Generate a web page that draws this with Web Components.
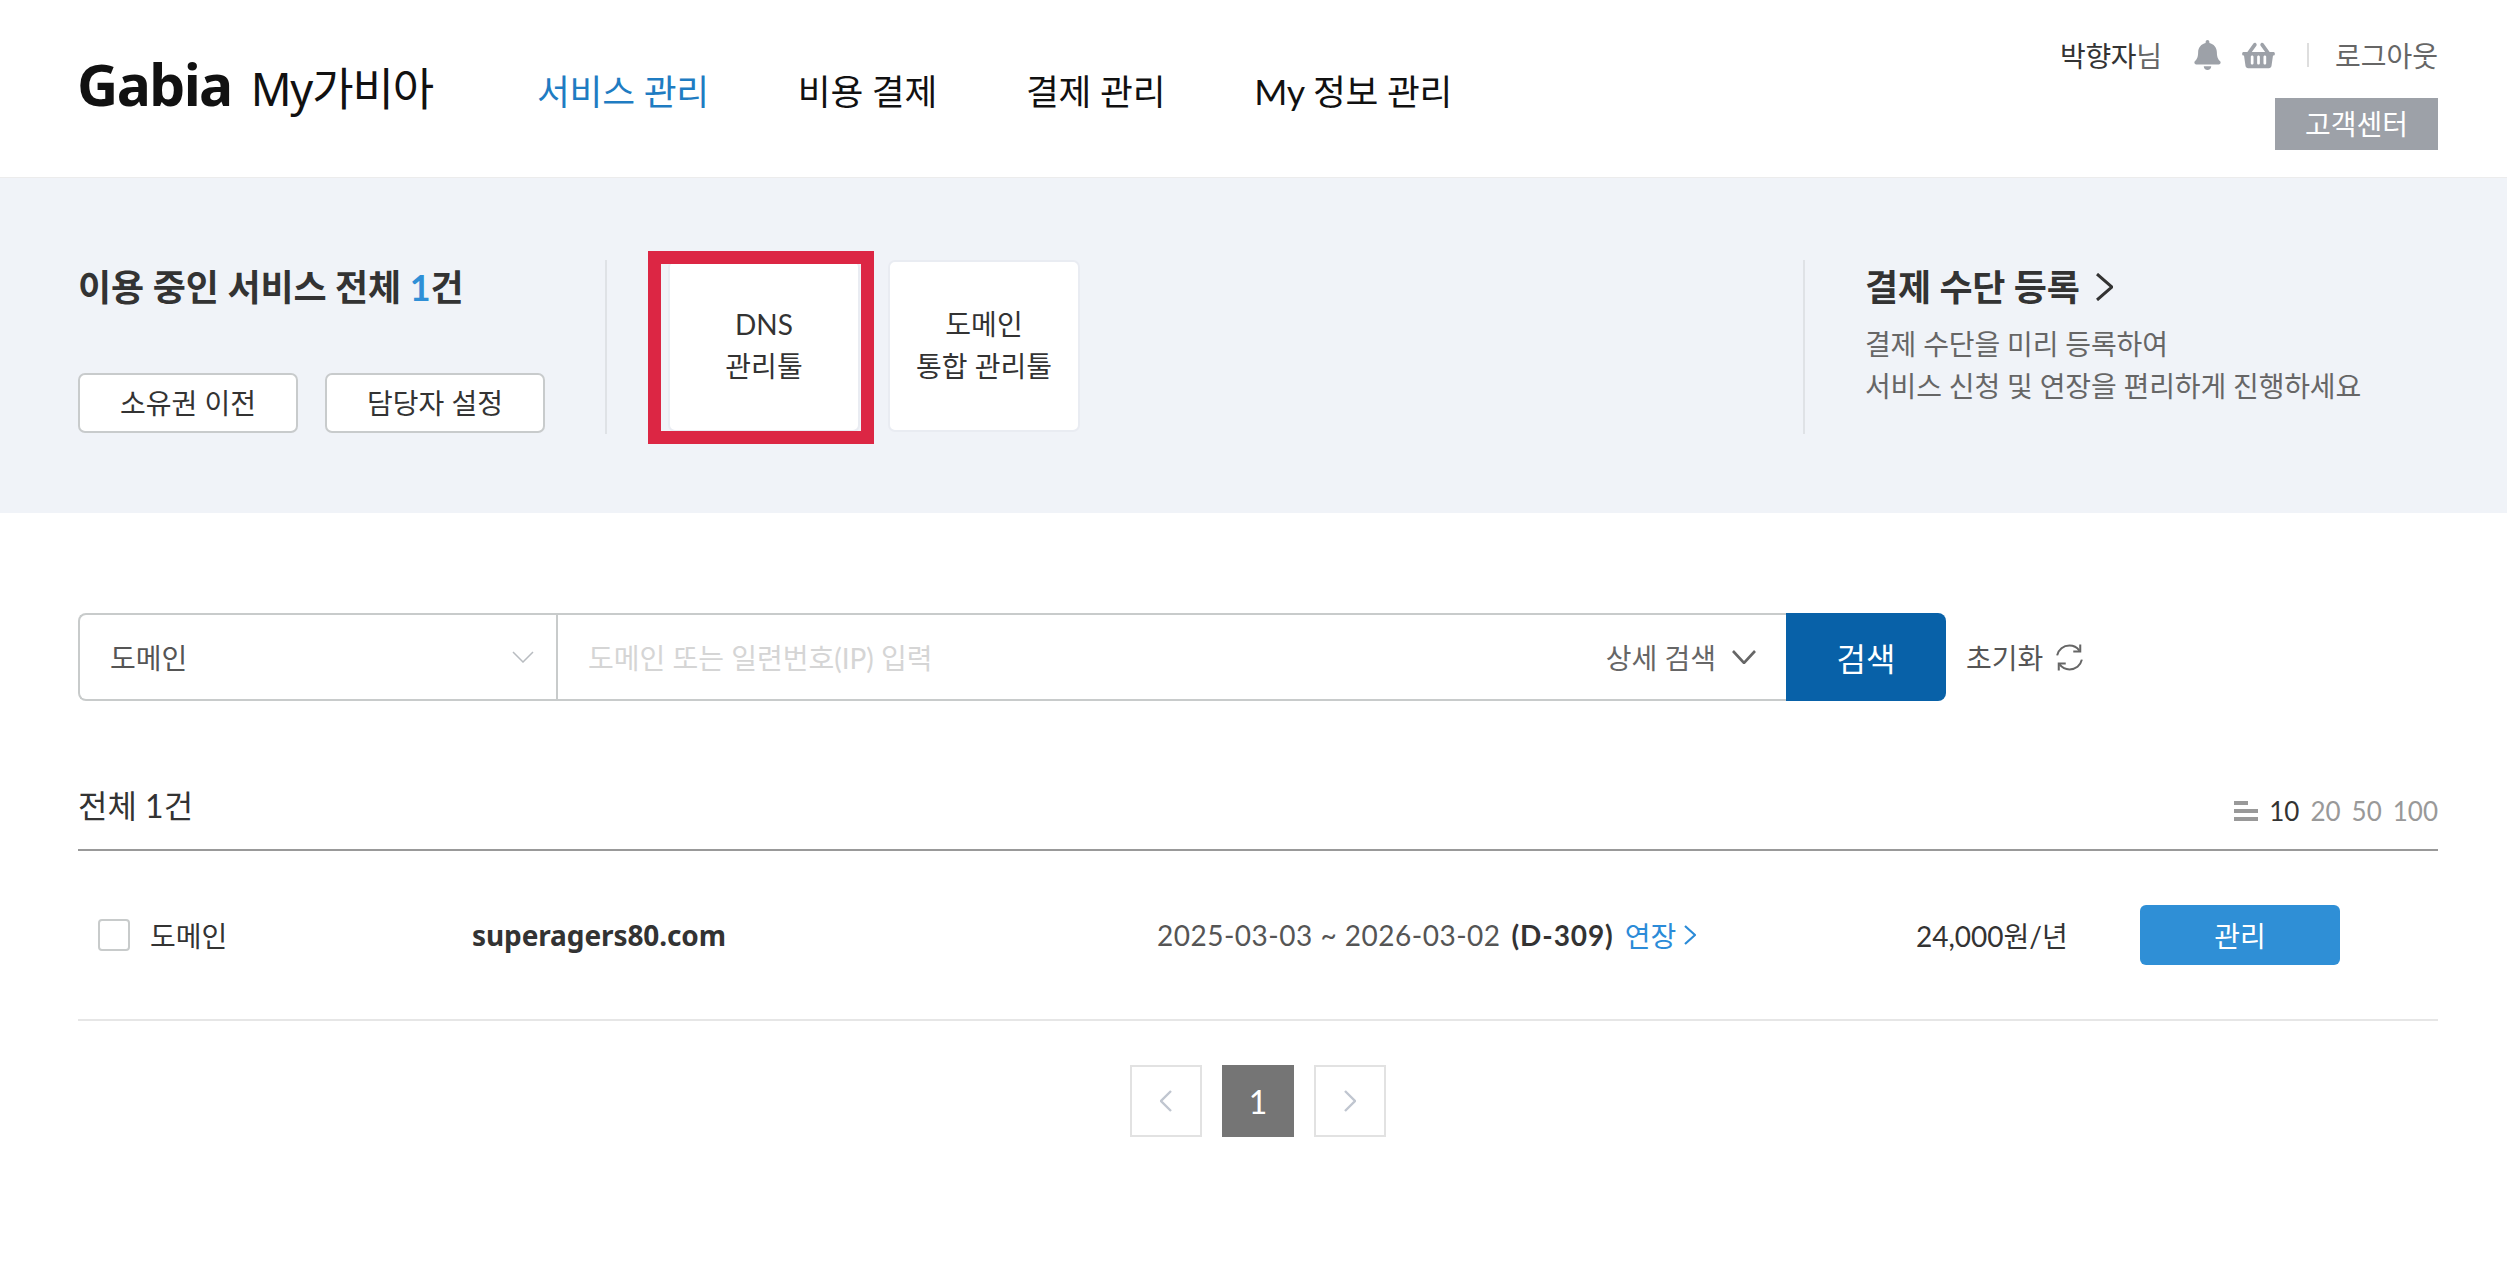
<!DOCTYPE html>
<html lang="ko">
<head>
<meta charset="utf-8">
<title>My가비아</title>
<style>
  html, body { margin: 0; background: #fff; }
  body { font-family: Lato, "Noto Sans CJK KR", sans-serif; color: #333; font-size: 28px; }
</style>
</head>
<body>
<gabia-header></gabia-header>
<service-band></service-band>
<search-bar></search-bar>
<service-list>
  <service-row domain="superagers80.com" start="2025-03-03" end="2026-03-02" dday="D-309" price="24,000원/년"></service-row>
</service-list>
<page-nav></page-nav>

<script>
const FONT = 'Lato, "Noto Sans CJK KR", sans-serif';
const chevron = (w, h, color, sw, dir) => {
    const d = { down: `M1 1L${w / 2} ${h - 1}L${w - 1} 1`, right: `M1 1L${w - 1} ${h / 2}L1 ${h - 1}`, left: `M${w - 1} 1L1 ${h / 2}L${w - 1} ${h - 1}` }[dir];
    return `<svg width="${w}" height="${h}" viewBox="0 0 ${w} ${h}" fill="none" stroke="${color}" stroke-width="${sw}"><path d="${d}"/></svg>`;
};

class GabiaHeader extends HTMLElement {
    constructor() {
        super();
        this.attachShadow({ mode: 'open' });
        this.shadowRoot.innerHTML = `
            <style>
                :host {
                    display: flex; justify-content: space-between; box-sizing: border-box;
                    height: 178px; padding: 0 69px 0 78px; border-bottom: 1px solid #ececec;
                    font-family: ${FONT};
                }
                .left { display: flex; align-items: center; height: 176px; }
                .logo { display: flex; align-items: baseline; width: 459px; padding-bottom: 8px; color: #111; }
                .logo b { font: 700 57px "Noto Sans", sans-serif; letter-spacing: -1.6px; margin-left: -1px; }
                .logo span { font-size: 45px; margin-left: 19px; letter-spacing: -1.1px; font-family: "Noto Sans", "Noto Sans CJK KR", sans-serif; }
                nav { display: flex; gap: 89px; font-size: 35.7px; color: #111; letter-spacing: -.25px; padding-top: 3px; }
                nav a.on { color: #1f7cc2; }
                .right { display: flex; flex-direction: column; align-items: flex-end; padding-top: 36px; }
                .util { display: flex; align-items: center; height: 38px; font-size: 28px; color: #666; }
                .util .name { color: #333; letter-spacing: -.4px; }
                .util .sir { color: #666; margin-right: 32px; }
                .util svg { fill: #9da1a8; display: block; }
                .util .bell { margin-right: 21px; }
                .util .sep { width: 2px; height: 24px; background: #dedede; margin: 0 26px 0 32px; }
                .center { display: flex; align-items: center; justify-content: center; box-sizing: border-box; width: 163px; height: 52px; padding-bottom: 2px; margin-top: 24px; background: #9da1a8; color: #fff; font-size: 28px; }
            </style>
            <div class="left">
                <div class="logo"><b>Gabia</b><span>My가비아</span></div>
                <nav><a class="on">서비스 관리</a><a>비용 결제</a><a>결제 관리</a><a>My 정보 관리</a></nav>
            </div>
            <div class="right">
                <div class="util">
                    <span class="name">박향자</span><span class="sir">님</span>
                    <svg class="bell" width="27" height="30" viewBox="0 0 448 512"><path d="M224 512c35.32 0 63.97-28.65 63.97-64H160.03c0 35.35 28.65 64 63.97 64zm215.39-149.71c-19.32-20.76-55.47-51.99-55.47-154.29 0-77.7-54.48-139.9-127.94-155.16V32c0-17.67-14.32-32-31.98-32s-31.98 14.33-31.98 32v20.84C118.56 68.1 64.08 130.3 64.08 208c0 102.3-36.15 133.53-55.47 154.29-6 6.45-8.66 14.16-8.61 21.71.11 16.4 12.98 32 32.1 32h383.8c19.12 0 32-15.6 32.1-32 .05-7.55-2.61-15.27-8.61-21.71z"/></svg>
                    <svg width="33" height="29" viewBox="0 0 576 512"><path d="M576 216v16c0 13.255-10.745 24-24 24h-8l-26.113 182.788C514.509 462.435 494.257 480 470.37 480H105.63c-23.887 0-44.139-17.565-47.518-41.212L32 256h-8c-13.255 0-24-10.745-24-24v-16c0-13.255 10.745-24 24-24h67.341l106.78-146.821c10.395-14.292 30.407-17.453 44.701-7.058 14.293 10.395 17.453 30.408 7.058 44.701L170.477 192h235.046L326.12 82.821c-10.395-14.292-7.234-34.306 7.059-44.701 14.291-10.395 34.306-7.235 44.701 7.058L484.659 192H552c13.255 0 24 10.745 24 24zM312 392V280c0-13.255-10.745-24-24-24s-24 10.745-24 24v112c0 13.255 10.745 24 24 24s24-10.745 24-24zm112 0V280c0-13.255-10.745-24-24-24s-24 10.745-24 24v112c0 13.255 10.745 24 24 24s24-10.745 24-24zm-224 0V280c0-13.255-10.745-24-24-24s-24 10.745-24 24v112c0 13.255 10.745 24 24 24s24-10.745 24-24z"/></svg>
                    <span class="sep"></span>
                    <span>로그아웃</span>
                </div>
                <a class="center">고객센터</a>
            </div>
        `;
    }
}
customElements.define('gabia-header', GabiaHeader);

class OutlineButton extends HTMLElement {
    constructor() {
        super();
        this.attachShadow({ mode: 'open' });
        this.shadowRoot.innerHTML = `
            <style>
                :host {
                    display: flex; align-items: center; justify-content: center; box-sizing: border-box;
                    width: 220px; height: 60px; padding-bottom: 2px; background: #fff; border: 2px solid #c8cbcc; border-radius: 7px;
                    font-size: 28px; color: #333;
                }
            </style>
            <slot></slot>
        `;
    }
}
customElements.define('outline-button', OutlineButton);

class ToolCard extends HTMLElement {
    constructor() {
        super();
        this.attachShadow({ mode: 'open' });
        this.shadowRoot.innerHTML = `
            <style>
                :host {
                    display: block; position: relative; box-sizing: border-box;
                    width: 192px; height: 172px; padding-top: 41px; background: #fff;
                    border: 2px solid #e9ecf2; border-radius: 7px;
                    text-align: center; font-size: 28px; line-height: 42px; color: #333;
                }
                .mark { display: none; position: absolute; left: -22px; top: -11px; width: 226px; height: 193px; box-sizing: border-box; border: 13px solid #dc2644; }
                :host([marked]) .mark { display: block; }
            </style>
            <slot></slot>
            <div class="mark"></div>
        `;
    }
}
customElements.define('tool-card', ToolCard);

class ServiceBand extends HTMLElement {
    constructor() {
        super();
        this.attachShadow({ mode: 'open' });
        this.shadowRoot.innerHTML = `
            <style>
                :host {
                    display: flex; box-sizing: border-box; height: 335px; padding: 82px 69px 0 78px;
                    background: #f0f3f8; font-family: ${FONT};
                }
                .summary { box-sizing: border-box; width: 529px; height: 174px; border-right: 2px solid #dfe2e6; }
                h2 { margin: 0; font-size: 36px; line-height: 54px; font-weight: 700; color: #333; letter-spacing: -.1px; }
                h2 em { font-style: normal; color: #2f8fd6; }
                .btns { display: flex; gap: 27px; margin-top: 59px; }
                .tools { display: flex; gap: 28px; width: 1196px; padding-left: 61px; box-sizing: border-box; }
                .pay { box-sizing: border-box; height: 174px; padding-left: 60px; border-left: 2px solid #dfe2e6; }
                .pay h3 { display: flex; align-items: center; gap: 16px; margin: 0 0 9px; font-size: 36px; line-height: 54px; font-weight: 700; color: #333; letter-spacing: -.2px; }
                .pay p { margin: 0; font-size: 28px; line-height: 42px; color: #666; letter-spacing: -.15px; }
            </style>
            <div class="summary">
                <h2>이용 중인 서비스 전체 <em>1</em>건</h2>
                <div class="btns">
                    <outline-button>소유권 이전</outline-button>
                    <outline-button>담당자 설정</outline-button>
                </div>
            </div>
            <div class="tools">
                <tool-card marked>DNS<br>관리툴</tool-card>
                <tool-card>도메인<br>통합 관리툴</tool-card>
            </div>
            <div class="pay">
                <h3>결제 수단 등록 ${chevron(17, 28, '#333', 3, 'right')}</h3>
                <p>결제 수단을 미리 등록하여<br>서비스 신청 및 연장을 편리하게 진행하세요</p>
            </div>
        `;
    }
}
customElements.define('service-band', ServiceBand);

class SearchBar extends HTMLElement {
    constructor() {
        super();
        this.attachShadow({ mode: 'open' });
        this.shadowRoot.innerHTML = `
            <style>
                :host {
                    display: flex; align-items: stretch; height: 88px; margin: 100px 0 0 78px;
                    font-family: ${FONT}; font-size: 28px; color: #666;
                }
                .box {
                    display: flex; box-sizing: border-box; width: 1708px;
                    border: 2px solid #c8cbcb; border-right: 0; border-radius: 8px 0 0 8px;
                }
                .select {
                    display: flex; align-items: center; justify-content: space-between; box-sizing: border-box;
                    width: 478px; padding: 0 22px 0 30px; border-right: 2px solid #c8cbcb; color: #555;
                }
                .input { flex: 1; display: flex; align-items: center; justify-content: space-between; padding: 0 30px 0 30px; }
                .holder { color: #d5d5d5; }
                .detail { display: flex; align-items: center; gap: 16px; }
                button {
                    width: 160px; border: 0; padding: 0; background: #0861a8; color: #fff; border-radius: 0 8px 8px 0;
                    font: inherit; font-size: 32px;
                }
                .reset { display: flex; align-items: center; gap: 12px; margin-left: 20px; color: #555; }
                svg { display: block; }
            </style>
            <div class="box">
                <div class="select"><span>도메인</span>${chevron(22, 12, '#b8bcc0', 1.5, 'down')}</div>
                <div class="input">
                    <span class="holder">도메인 또는 일련번호(IP) 입력</span>
                    <span class="detail">상세 검색 ${chevron(24, 14, '#666', 2.6, 'down')}</span>
                </div>
            </div>
            <button>검색</button>
            <div class="reset">초기화
                <svg width="29" height="29" viewBox="0 0 27 27" fill="none" stroke="#666" stroke-width="1.9">
                    <path d="M2 11.500C3.200 6 7.800 2.400 13.500 2.400c3.800 0 7 1.700 9.200 4.600"/>
                    <path d="M25 15.500c-1.200 5.500-5.800 9.100-11.500 9.100-3.800 0-7-1.700-9.200-4.600"/>
                    <path d="M23.500 1.500v6.500h-6.500"/>
                    <path d="M3.500 25.500v-6.500h6.500"/>
                </svg>
            </div>
        `;
    }
}
customElements.define('search-bar', SearchBar);

class ServiceList extends HTMLElement {
    constructor() {
        super();
        this.attachShadow({ mode: 'open' });
        this.shadowRoot.innerHTML = `
            <style>
                :host { display: block; margin: 0 69px 0 78px; font-family: ${FONT}; }
                .head {
                    display: flex; align-items: center; justify-content: space-between; box-sizing: border-box;
                    height: 150px; padding-top: 74px; padding-bottom: 14px; border-bottom: 2px solid #999;
                }
                .total { font-size: 32px; color: #333; margin-top: -2px; }
                .sizes { display: flex; align-items: center; gap: 11px; font-size: 26px; color: #999; padding-top: 11px; }
                .sizes svg { display: block; fill: #999; }
                .sizes b { font-weight: 400; color: #333; }
            </style>
            <div class="head">
                <span class="total">전체 1건</span>
                <div class="sizes">
                    <svg width="24" height="20" viewBox="0 0 24 20"><rect width="14" height="4"/><rect y="8" width="24" height="4"/><rect y="16" width="24" height="4"/></svg>
                    <b>10</b><span>20</span><span>50</span><span>100</span>
                </div>
            </div>
            <slot></slot>
        `;
    }
}
customElements.define('service-list', ServiceList);

class ServiceRow extends HTMLElement {
    constructor() {
        super();
        this.attachShadow({ mode: 'open' });
        const a = (n) => this.getAttribute(n);
        this.shadowRoot.innerHTML = `
            <style>
                :host {
                    display: grid; grid-template-columns: 394px 685px 759px 223px 201px; align-items: center;
                    box-sizing: border-box; height: 170px; border-bottom: 2px solid #e6e6e6;
                    font-size: 28px; color: #555;
                }
                .kind { display: flex; align-items: center; gap: 20px; padding-left: 20px; color: #333; }
                .check { box-sizing: border-box; width: 32px; height: 32px; border: 2px solid #c8cbcb; border-radius: 4px; }
                .domain { font: 700 28px "Noto Sans", sans-serif; color: #333; letter-spacing: -.1px; }
                .period { display: flex; align-items: center; white-space: nowrap; letter-spacing: .5px; }
                .period b { color: #333; margin-left: 11px; letter-spacing: .9px; }
                .period a { display: flex; align-items: center; gap: 8px; color: #2b8bd8; margin-left: 11px; letter-spacing: 0; }
                .price { color: #333; }
                .manage {
                    display: flex; align-items: center; justify-content: center; height: 60px; margin-left: 1px;
                    background: #2f8fd6; color: #fff; border-radius: 6px;
                }
            </style>
            <div class="kind"><span class="check"></span>도메인</div>
            <div class="domain">${a('domain')}</div>
            <div class="period">${a('start')} ~ ${a('end')}<b>(${a('dday')})</b><a>연장 ${chevron(12, 20, '#2b8bd8', 2.2, 'right')}</a></div>
            <div class="price">${a('price')}</div>
            <div class="manage">관리</div>
        `;
    }
}
customElements.define('service-row', ServiceRow);

class PageNav extends HTMLElement {
    constructor() {
        super();
        this.attachShadow({ mode: 'open' });
        this.shadowRoot.innerHTML = `
            <style>
                :host { display: flex; justify-content: flex-start; gap: 20px; margin: 44px 0 0 1130px; font-family: ${FONT}; }
                div {
                    display: flex; align-items: center; justify-content: center; box-sizing: border-box;
                    width: 72px; height: 72px; border: 2px solid #e2e2e2; font-size: 32px;
                }
                .on { background: #757575; border-color: #757575; color: #fff; }
            </style>
            <div>${chevron(12, 22, '#c0c6d0', 2.4, 'left')}</div>
            <div class="on">1</div>
            <div>${chevron(12, 22, '#c0c6d0', 2.4, 'right')}</div>
        `;
    }
}
customElements.define('page-nav', PageNav);
</script>
</body>
</html>
